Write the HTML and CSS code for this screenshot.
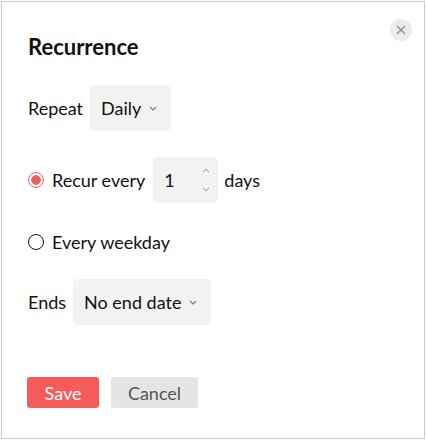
FILE: index.html
```html
<!DOCTYPE html>
<html>
<head>
<meta charset="utf-8">
<link rel="stylesheet" href="styles.css">
</head>
<body>
<div class="panel">
  <button class="close" aria-label="Close">
    <svg width="10" height="10" viewBox="0 0 10 10"><path d="M1 1L9 9M9 1L1 9" stroke="#8a8a8a" stroke-width="1.2" fill="none"/></svg>
  </button>
  <h1 class="title">Recurrence</h1>
  <div class="row">
    <span class="label">Repeat</span>
    <div class="select select-repeat"><span>Daily</span>
      <svg class="chev" width="8" height="5" viewBox="0 0 8 5"><path d="M1 1L4 4L7 1" stroke="#777" stroke-width="1.1" fill="none"/></svg>
    </div>
  </div>
  <div class="row row-recur">
    <span class="radio radio-on"></span>
    <span class="label">Recur every</span>
    <div class="number"><span>1</span>
      <span class="spin">
        <svg width="8" height="5" viewBox="0 0 8 5"><path d="M1 4L4 1L7 4" stroke="#999" stroke-width="1" fill="none"/></svg>
        <svg width="8" height="5" viewBox="0 0 8 5"><path d="M1 1L4 4L7 1" stroke="#999" stroke-width="1" fill="none"/></svg>
      </span>
    </div>
    <span class="label">days</span>
  </div>
  <div class="row row-weekday">
    <span class="radio"></span>
    <span class="label">Every weekday</span>
  </div>
  <div class="row row-ends">
    <span class="label">Ends</span>
    <div class="select select-ends"><span>No end date</span>
      <svg class="chev" width="8" height="5" viewBox="0 0 8 5"><path d="M1 1L4 4L7 1" stroke="#777" stroke-width="1.1" fill="none"/></svg>
    </div>
  </div>
  <div class="actions">
    <button class="btn btn-save">Save</button>
    <button class="btn btn-cancel">Cancel</button>
  </div>
</div>
</body>
</html>
```
FILE: styles.css
```css
html, body {
  margin: 0;
  padding: 0;
  background: #ffffff;
}
body {
  font-family: Lato, "Noto Sans", sans-serif;
  color: #111;
}
.panel {
  position: relative;
  box-sizing: border-box;
  width: 424px;
  height: 438px;
  margin: 1px;
  border: 1px solid #c9c9c9;
  padding: 32px 0 0 26px;
}
.close {
  position: absolute;
  top: 17px;
  right: 12px;
  width: 22px;
  height: 22px;
  border-radius: 50%;
  border: none;
  background: #ececec;
  padding: 0;
  display: flex;
  align-items: center;
  justify-content: center;
}
.title {
  margin: 0;
  font-size: 22px;
  line-height: 26px;
  font-weight: 700;
  color: #111;
}
.row {
  display: flex;
  align-items: center;
  margin-top: 25px;
  font-size: 18px;
}
.row-recur { margin-top: 26px; }
.row-weekday { height: 24px; margin-top: 27px; }
.label { line-height: 24px; }
.select {
  display: flex;
  align-items: center;
  height: 46px;
  box-sizing: border-box;
  padding: 0 14px 0 11px;
  background: #f2f2f2;
  border-radius: 5px;
  margin-left: 7px;
}
.select .chev { margin-left: 8px; margin-top: 1px; }
.select-ends { margin-left: 7px; }
.radio {
  box-sizing: border-box;
  width: 16px;
  height: 16px;
  border-radius: 50%;
  border: 1.5px solid #111;
  margin: 0 8px 0 0;
  flex: none;
}
.radio-on {
  border: 1.5px solid #f65b5b;
  background: radial-gradient(circle, #f65b5b 0 4.5px, #fff 5px);
}
.number {
  display: flex;
  align-items: center;
  justify-content: space-between;
  width: 65px;
  height: 46px;
  box-sizing: border-box;
  padding: 0 8px 0 11px;
  background: #f2f2f2;
  border-radius: 5px;
  margin: 0 6px 0 8px;
}
.spin {
  display: flex;
  flex-direction: column;
  gap: 14px;
}
.spin svg { display: block; }
.actions {
  display: flex;
  gap: 12px;
  margin-top: 52px;
  margin-left: -1px;
}
.btn {
  height: 31px;
  border: none;
  border-radius: 3px;
  font-family: Lato, "Noto Sans", sans-serif;
  font-size: 18px;
  padding: 0;
}
.btn-save {
  width: 72px;
  background: #f65b5b;
  color: #fff;
}
.btn-cancel {
  width: 87px;
  background: #e5e5e5;
  color: #555;
}
```
